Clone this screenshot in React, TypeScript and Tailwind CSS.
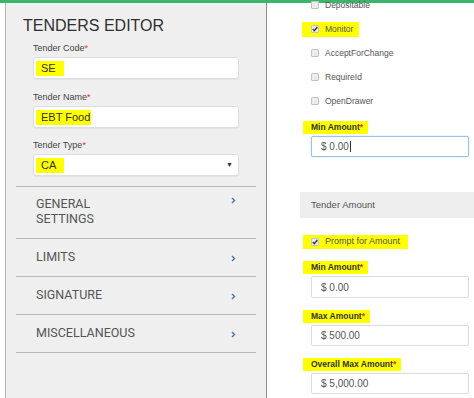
import React from "react";

const sans = { fontFamily: '"Liberation Sans", Arial, sans-serif' };
const menuFont = { fontFamily: 'Roboto, "Open Sans", sans-serif' };

function Chevron() {
  return (
    <svg width="5" height="7" viewBox="0 0 5 7" className="mt-[1px]">
      <polyline points="1,1 3.5,3.5 1,6" fill="none" stroke="#4d73a8" strokeWidth="1.4" />
    </svg>
  );
}

function Box({ checked }: { checked?: boolean }) {
  return (
    <span className="w-[8px] h-[8px] border border-[#c4c4c4] bg-[#ececec] rounded-[1px] flex items-center justify-center">
      {checked && (
        <svg width="6" height="6" viewBox="0 0 6 6">
          <polyline points="0.8,3 2.4,4.7 5.3,1" fill="none" stroke="#333" strokeWidth="1.3" />
        </svg>
      )}
    </span>
  );
}

function CheckRow({ label, checked, hl }: { label: string; checked?: boolean; hl?: boolean }) {
  return (
    <div className="h-[24px] flex items-center">
      <div
        className={`flex items-center gap-[6px] ml-[35px] pl-[9px] pr-[6px] h-[15px] ${hl ? "bg-[#ffff00]" : ""}`}
      >
        <Box checked={checked} />
        <span className="text-[8.5px] leading-[12px] text-[#555]" style={sans}>
          {label}
        </span>
      </div>
    </div>
  );
}

function AmountLabel({ text, mt }: { text: string; mt: string }) {
  return (
    <div className={`h-[12px] flex items-center ${mt}`}>
      <span className="ml-[36px] pl-[8px] pr-[5px] h-[13px] flex items-center bg-[#ffff00] text-[8.5px] font-semibold text-[#333]" style={sans}>
        {text}
        <span className="text-[#e0302a]">*</span>
      </span>
    </div>
  );
}

function AmountInput({ value, h, focused }: { value: string; h: string; focused?: boolean }) {
  return (
    <div
      className={`mt-[3px] ml-[44px] w-[158px] ${h} bg-white rounded-[2px] flex items-center pl-[9px] text-[10px] text-[#555] ${
        focused ? "border border-[#9cc3e6] shadow-[0_0_2px_#b9d6f0]" : "border border-[#dcdcdc]"
      }`}
      style={sans}
    >
      {value}
      {focused && <span className="w-[1px] h-[11px] bg-[#333] ml-[1px]" />}
    </div>
  );
}

function FieldLabel({ text, mt }: { text: string; mt: string }) {
  return (
    <div className={`h-[12px] leading-[12px] ${mt} ml-[27px] text-[9px] text-[#444]`} style={sans}>
      {text}
      <span className="text-[#e0302a]">*</span>
    </div>
  );
}

function FieldInput({ value, hlW, select }: { value: string; hlW: string; select?: boolean }) {
  return (
    <div
      className="mt-[3px] ml-[27px] w-[206px] h-[22px] bg-white border border-[#dedede] rounded-[3px] shadow-[0_1px_1px_rgba(0,0,0,0.05)] flex items-center pl-[2px] pr-[5px]"
      style={sans}
    >
      <span className={`h-[15px] ${hlW} bg-[#ffff00] flex items-center pl-[5px] text-[11px] text-[#333]`}>{value}</span>
      {select && <span className="ml-auto text-[7px] text-[#333]">▼</span>}
    </div>
  );
}

function MenuItem({ children, h, start }: { children: React.ReactNode; h: string; start?: boolean }) {
  return (
    <div
      className={`${h} border-b border-[#b9b9b9] flex ${start ? "items-start pt-[9px]" : "items-center"} pl-[20px] pr-[20px] justify-between`}
    >
      <div className="text-[12.5px] text-[#555]" style={menuFont}>
        {children}
      </div>
      <Chevron />
    </div>
  );
}

export default function App() {
  return (
    <div className="w-[474px] h-[398px] overflow-hidden bg-white flex flex-col">
      <div className="h-[3px] bg-[#3bb56c] shrink-0" />
      <div className="flex flex-1 min-h-0">
        <div className="w-[5px] shrink-0" />
        <div className="w-[262px] shrink-0 bg-[#efefef] border-l border-[#b3b3b3] border-r border-r-[#8e8e8e] flex flex-col">
          <div className="h-[20px] leading-[20px] mt-[13px] ml-[17px] text-[16px] text-[#2f2f2f]" style={sans}>
            TENDERS EDITOR
          </div>
          <FieldLabel text="Tender Code" mt="mt-[6px]" />
          <FieldInput value="SE" hlW="w-[28px]" />
          <FieldLabel text="Tender Name" mt="mt-[12px]" />
          <FieldInput value="EBT Food" hlW="w-[55px]" />
          <FieldLabel text="Tender Type" mt="mt-[11px]" />
          <FieldInput value="CA" hlW="w-[28px]" select />
          <div className="mt-[10px] mx-[10px] border-t border-[#b9b9b9]">
            <MenuItem h="h-[52px]" start>
              <div className="h-[15px] leading-[15px]">GENERAL</div>
              <div className="h-[15px] leading-[15px]">SETTINGS</div>
            </MenuItem>
            <MenuItem h="h-[38px]">LIMITS</MenuItem>
            <MenuItem h="h-[38px]">SIGNATURE</MenuItem>
            <MenuItem h="h-[38px]">MISCELLANEOUS</MenuItem>
          </div>
        </div>
        <div className="flex-1 flex flex-col">
          <div className="-mt-[10px]">
            <CheckRow label="Depositable" />
            <CheckRow label="Monitor" checked hl />
            <CheckRow label="AcceptForChange" />
            <CheckRow label="RequireId" />
            <CheckRow label="OpenDrawer" />
          </div>
          <AmountLabel text="Min Amount" mt="mt-[8px]" />
          <AmountInput value="$ 0.00" h="h-[21px]" focused />
          <div
            className="mt-[35px] ml-[33px] h-[26px] bg-[#eeeeee] flex items-center pl-[11px] text-[9.5px] text-[#555]"
            style={sans}
          >
            Tender Amount
          </div>
          <div className="mt-[16px] h-[16px] flex items-center">
            <div className="flex items-center gap-[6px] ml-[36px] pl-[8px] pr-[8px] h-[14px] bg-[#ffff00]">
              <Box checked />
              <span className="text-[9px] text-[#555]" style={sans}>
                Prompt for Amount
              </span>
            </div>
          </div>
          <AmountLabel text="Min Amount" mt="mt-[11px]" />
          <AmountInput value="$ 0.00" h="h-[22px]" />
          <AmountLabel text="Max Amount" mt="mt-[12px]" />
          <AmountInput value="$ 500.00" h="h-[21px]" />
          <AmountLabel text="Overall Max Amount" mt="mt-[12px]" />
          <AmountInput value="$ 5,000.00" h="h-[21px]" />
        </div>
      </div>
    </div>
  );
}
